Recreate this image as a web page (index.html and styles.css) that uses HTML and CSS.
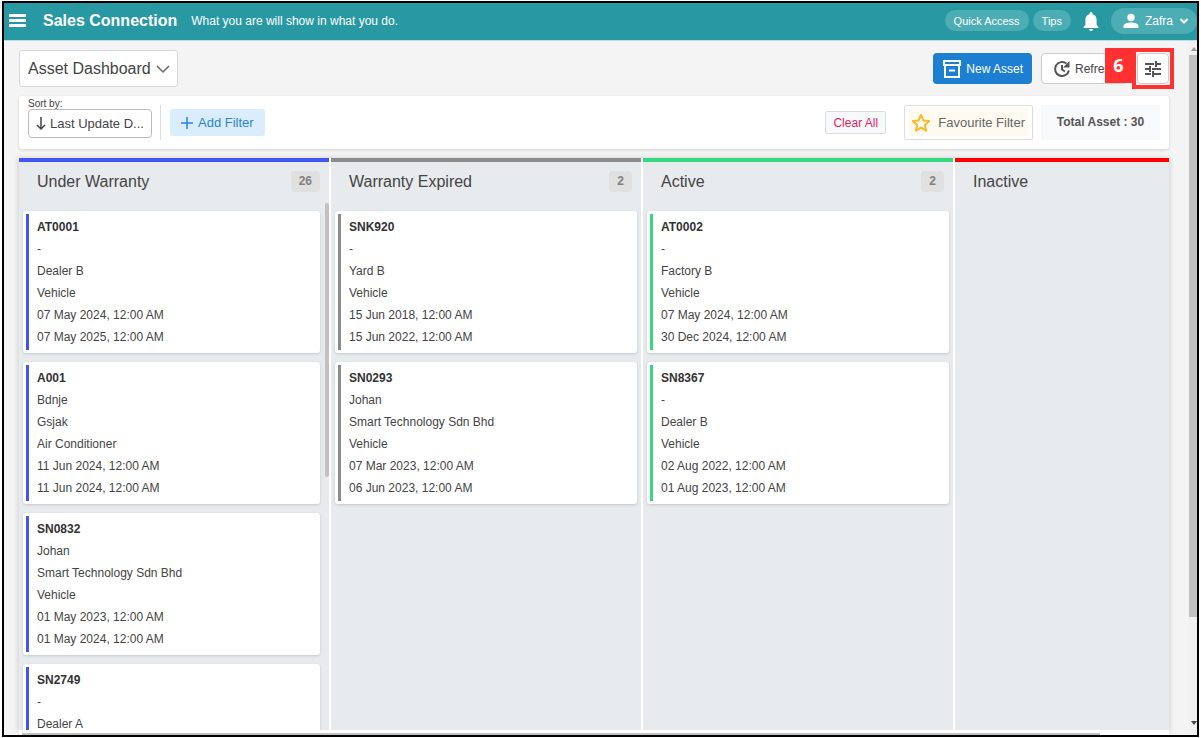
FILE: index.html
```html
<!DOCTYPE html>
<html lang="en">
<head>
    <meta charset="UTF-8">
    <meta name="viewport" content="width=device-width, initial-scale=1.0">
    <title>Asset Dashboard</title>
    <link rel="stylesheet" href="styles.css">
</head>
<body>
<div class="app">
    <header class="topbar">
        <button class="menu-btn" aria-label="Menu"><span></span><span></span><span></span></button>
        <h1>Sales Connection</h1>
        <p>What you are will show in what you do.</p>
        <div class="topbar-right">
            <button class="pill">Quick Access</button>
            <button class="pill">Tips</button>
            <button class="bell" aria-label="Notifications">
                <svg width="16" height="20" viewBox="0 0 16 20"><path fill="#fff" d="M8 1a1.500 1.500 0 0 0-1.500 1.500v.7C3.800 3.900 2.400 6.200 2.400 9v5L.5 16v1h15v-1l-1.900-2V9c0-2.800-1.400-5.100-4.100-5.800v-.7A1.500 1.500 0 0 0 8 1zM6 18a2 2 0 0 0 4 0z"/></svg>
            </button>
            <button class="user">
                <svg width="16" height="16" viewBox="0 0 16 16"><circle cx="8" cy="4.500" r="3.700" fill="#fff"/><path fill="#fff" d="M.5 15v-2c0-2.500 5-3.600 7.500-3.600s7.500 1.100 7.500 3.600v2z"/></svg>
                Zafra
                <svg width="10" height="8" viewBox="0 0 10 8"><path fill="none" stroke="#fff" stroke-width="2" d="M1.500 2 5 5.500 8.500 2"/></svg>
            </button>
        </div>
    </header>

    <div class="body">
        <main>
            <div class="toolbar">
                <div class="page-select">
                    <select aria-label="Dashboard"><option>Asset Dashboard</option></select>
                    <svg width="14" height="10" viewBox="0 0 14 10"><path fill="none" stroke="#666" stroke-width="1.500" d="M1 2l6 6 6-6"/></svg>
                </div>
                <div class="actions">
                    <button class="btn-primary">
                        <svg width="20" height="20" viewBox="0 0 20 20" fill="none" stroke="#fff" stroke-width="2"><rect x="2" y="2" width="16" height="4"/><path d="M3 6v12h14V6M7 11.500h6"/></svg>
                        New Asset
                    </button>
                    <button class="btn-outline">
                        <svg width="18" height="18" viewBox="0 0 18 18" fill="none" stroke="#555" stroke-width="2"><path d="M13.500 3.600A7 7 0 1 0 15.900 10.500M9 5v4.500l3 2"/><path fill="#555" stroke="none" d="M16.500 1v6.500H10z"/></svg>
                        Refresh
                    </button>
                    <div class="tune-wrap">
                        <button class="tune" aria-label="Display settings">
                            <svg width="18" height="18" viewBox="0 0 18 18" fill="none" stroke="#555" stroke-width="2"><path d="M1 4h9M12 4h5M12 1v6M1 9h5M6 6v6M8 9h9M1 14h6M9 14h8M9 11v6"/></svg>
                        </button>
                        <div class="marker">6</div>
                    </div>
                </div>
            </div>

            <section class="filters">
                <div class="sort">
                    <label for="sort">Sort by:</label>
                    <div class="sort-box">
                        <svg width="10" height="14" viewBox="0 0 10 14"><path fill="none" stroke="#444" stroke-width="1.500" d="M5 0v12M1 8l4 4 4-4"/></svg>
                        <select id="sort"><option>Last Update D...</option></select>
                    </div>
                </div>
                <div class="divider"></div>
                <button class="add-filter">
                    <svg width="12" height="12" viewBox="0 0 12 12"><path stroke="#2a85d8" stroke-width="1.500" d="M6 0v12M0 6h12"/></svg>
                    Add Filter
                </button>
                <div class="filters-right">
                    <button class="clear">Clear All</button>
                    <button class="favourite"><span>
                        <svg width="20" height="20" viewBox="0 0 20 20"><path fill="none" stroke="#fbb829" stroke-width="2" stroke-linejoin="round" d="M10 2l2.400 5.400 5.800.6-4.400 3.900 1.300 5.800L10 14.700l-5.100 3 1.300-5.800L1.800 8l5.800-.6z"/></svg>
                        Favourite Filter
                    </span></button>
                    <div class="total">Total Asset : 30</div>
                </div>
            </section>

            <section class="board">
                <div class="column blue scrolls">
                    <div class="column-head"><h2>Under Warranty</h2><span class="count">26</span></div>
                    <div class="cards">
                        <article class="card"><ul><li>AT0001</li><li>-</li><li>Dealer B</li><li>Vehicle</li><li>07 May 2024, 12:00 AM</li><li>07 May 2025, 12:00 AM</li></ul></article>
                        <article class="card"><ul><li>A001</li><li>Bdnje</li><li>Gsjak</li><li>Air Conditioner</li><li>11 Jun 2024, 12:00 AM</li><li>11 Jun 2024, 12:00 AM</li></ul></article>
                        <article class="card"><ul><li>SN0832</li><li>Johan</li><li>Smart Technology Sdn Bhd</li><li>Vehicle</li><li>01 May 2023, 12:00 AM</li><li>01 May 2024, 12:00 AM</li></ul></article>
                        <article class="card"><ul><li>SN2749</li><li>-</li><li>Dealer A</li></ul></article>
                    </div>
                    <div class="column-thumb"></div>
                </div>
                <div class="column grey">
                    <div class="column-head"><h2>Warranty Expired</h2><span class="count">2</span></div>
                    <div class="cards">
                        <article class="card"><ul><li>SNK920</li><li>-</li><li>Yard B</li><li>Vehicle</li><li>15 Jun 2018, 12:00 AM</li><li>15 Jun 2022, 12:00 AM</li></ul></article>
                        <article class="card"><ul><li>SN0293</li><li>Johan</li><li>Smart Technology Sdn Bhd</li><li>Vehicle</li><li>07 Mar 2023, 12:00 AM</li><li>06 Jun 2023, 12:00 AM</li></ul></article>
                    </div>
                </div>
                <div class="column green">
                    <div class="column-head"><h2>Active</h2><span class="count">2</span></div>
                    <div class="cards">
                        <article class="card"><ul><li>AT0002</li><li>-</li><li>Factory B</li><li>Vehicle</li><li>07 May 2024, 12:00 AM</li><li>30 Dec 2024, 12:00 AM</li></ul></article>
                        <article class="card"><ul><li>SN8367</li><li>-</li><li>Dealer B</li><li>Vehicle</li><li>02 Aug 2022, 12:00 AM</li><li>01 Aug 2023, 12:00 AM</li></ul></article>
                    </div>
                </div>
                <div class="column red">
                    <div class="column-head"><h2>Inactive</h2></div>
                </div>
            </section>
            <div class="hscroll"><div></div></div>
        </main>
        <div class="vscroll">
            <svg width="8" height="14" viewBox="0 0 8 14"><path fill="#999" d="M2 10l3-4 3 4z"/></svg>
            <div class="vthumb"></div>
            <svg width="8" height="14" viewBox="0 0 8 14"><path fill="#444" d="M2 0h6L5 4z"/></svg>
        </div>
    </div>
</div>
</body>
</html>
```
FILE: styles.css
```css
* {
    margin: 0;
    padding: 0;
    box-sizing: border-box;
}

body {
    font-family: "Liberation Sans", Arial, sans-serif;
    font-size: 13px;
    color: #444;
    background: #fff;
    height: 100vh;
    padding: 1px 2px;
}

button, select {
    font: inherit;
    color: inherit;
    border: none;
    background: none;
    cursor: pointer;
}

svg {
    flex: none;
}

.app {
    height: 100%;
    border: 2px solid #000;
    display: flex;
    flex-direction: column;
    overflow: hidden;
}

/* Top bar */
.topbar {
    background: #2899a3;
    color: #fff;
    height: 38px;
    flex: none;
    display: flex;
    align-items: center;
    border-bottom: 1px solid #b9dfe3;
    padding: 0 0 2px 5px;
}

.menu-btn {
    width: 17px;
    display: grid;
    gap: 2px;
}

.menu-btn span {
    height: 3px;
    background: #fff;
}

.topbar h1 {
    font-size: 16px;
    margin: 0 14px 0 17px;
}

.topbar p {
    font-size: 12px;
}

.topbar-right {
    margin-left: auto;
    display: flex;
    align-items: center;
    font-size: 12px;
}

.pill {
    background: #4dadb5;
    border-radius: 11px;
    height: 21px;
    padding: 0 9px;
    margin-right: 4px;
    font-size: 11px;
}

.bell {
    display: flex;
    margin: 0 12px 0 8px;
}

.user {
    background: #4dadb5;
    border-radius: 13px;
    height: 26px;
    padding: 0 8px 0 12px;
    display: flex;
    align-items: center;
    gap: 6px;
}

/* Page */
.body {
    flex: 1;
    min-height: 0;
    display: flex;
    background: #f4f4f4;
}

main {
    flex: 1;
    min-width: 0;
    display: flex;
    flex-direction: column;
    padding: 9px 20px 0 15px;
}

.toolbar {
    display: flex;
    justify-content: space-between;
    align-items: center;
    margin-bottom: 9px;
}

.page-select {
    position: relative;
}

.page-select select {
    appearance: none;
    display: block;
    width: 159px;
    height: 37px;
    padding-left: 8px;
    font-size: 16px;
    background: #fff;
    border: 1px solid #d5d9de;
    border-radius: 3px;
}

.page-select svg {
    position: absolute;
    right: 8px;
    top: 14px;
    pointer-events: none;
}

.actions {
    display: flex;
    gap: 9px;
    font-size: 12px;
}

.btn-primary, .btn-outline {
    display: flex;
    align-items: center;
    height: 31px;
    border-radius: 4px;
}

.btn-primary {
    background: #1c7fd2;
    color: #fff;
    gap: 4px;
    padding: 0 9px;
}

.btn-outline, .tune {
    background: #fff;
    border: 1px solid #ccc;
}

.btn-outline {
    width: 87px;
    gap: 4px;
    padding-left: 11px;
}

.tune-wrap {
    position: relative;
}

.tune {
    width: 32px;
    height: 31px;
    border-radius: 4px;
    display: grid;
    place-items: center;
}

/* Numbered callout around the settings button */
.tune-wrap::after {
    content: "";
    position: absolute;
    inset: -5px;
    border: 4px solid #ff3131;
}

.marker {
    position: absolute;
    right: 37px;
    top: -5px;
    width: 27px;
    height: 35px;
    background: #ff3131;
    color: #fff;
    font: bold 18px/35px "Open Sans", sans-serif;
    text-align: center;
}

/* Filters */
.filters {
    background: #fff;
    border-radius: 3px;
    box-shadow: 0 1px 3px rgba(0, 0, 0, 0.15);
    min-height: 53px;
    padding: 0 9px;
    display: flex;
    align-items: center;
    margin-bottom: 9px;
}

.sort {
    align-self: flex-start;
    padding-top: 3px;
}

.sort label {
    display: block;
    font-size: 10px;
    line-height: 10px;
}

.sort-box {
    display: flex;
    align-items: center;
    width: 124px;
    height: 29px;
    border: 1px solid #bbb;
    border-radius: 4px;
    padding-left: 7px;
    gap: 4px;
}

.sort-box select {
    appearance: none;
}

.divider {
    width: 1px;
    height: 35px;
    margin: 0 9px 0 8px;
    background: #ddd;
}

.add-filter {
    display: flex;
    align-items: center;
    gap: 5px;
    height: 27px;
    padding: 0 11px;
    background: #d9edfd;
    color: #2a85d8;
    border-radius: 3px;
}

.filters-right {
    margin-left: auto;
    display: flex;
    align-items: center;
}

.clear {
    height: 23px;
    width: 61px;
    margin-right: 18px;
    font-size: 12px;
    color: #e91e63;
    background: #f8f9fb;
    border: 1px solid #ddd;
    border-radius: 2px;
}

.favourite {
    height: 35px;
    padding: 0 4px;
    margin-right: 8px;
    border: 1px solid #ddd;
    border-radius: 2px;
    color: #666;
}

.favourite span {
    display: flex;
    align-items: center;
    gap: 7px;
    height: 27px;
    padding: 0 3px 0 2px;
    background: #fffaf0;
}

.total {
    width: 119px;
    line-height: 35px;
    text-align: center;
    font-size: 12px;
    font-weight: bold;
    color: #555;
    background: #f8f9fb;
}

/* Board */
.board {
    flex: 1;
    min-height: 0;
    display: flex;
    gap: 2px;
    background: #fff;
    box-shadow: 0 1px 6px rgba(0, 0, 0, 0.2);
    overflow: hidden;
}

.column {
    flex: none;
    width: 310px;
    background: #e7ebee;
    border-top: 4px solid;
    position: relative;
}

.blue { border-color: #4255f5; }
.grey { border-color: #8c8c8c; }
.green { border-color: #34d880; }
.red { border-color: #f00; }

.column-head {
    display: flex;
    align-items: center;
    justify-content: space-between;
    height: 40px;
    padding: 0 9px 0 18px;
    border-bottom: 1px solid #ebebeb;
}

.column-head h2 {
    font-size: 16px;
    font-weight: normal;
}

.count {
    background: #e0e0e0;
    color: #808080;
    font-size: 12px;
    font-weight: bold;
    line-height: 21px;
    padding: 0 8px;
    border-radius: 3px;
}

.cards {
    display: grid;
    gap: 9px;
    padding: 9px 4px 0;
    font-size: 12px;
}

.scrolls .cards {
    padding-right: 9px;
}

.card {
    background: #fff;
    border-radius: 3px;
    box-shadow: 0 1px 3px rgba(0, 0, 0, 0.15);
    padding: 3px;
}

.card ul {
    list-style: none;
    border-left: 3px solid;
    border-color: inherit;
    padding: 2px 0 2px 8px;
    line-height: 22px;
}

.blue .card { border-color: #4255f5; }
.grey .card { border-color: #8c8c8c; }
.green .card { border-color: #34d880; }

.card li:first-child {
    font-weight: bold;
    color: #333;
}

.column-thumb {
    position: absolute;
    top: 41px;
    right: 0;
    width: 4px;
    height: 274px;
    border-radius: 2px;
    background: #c1c1c1;
}

/* Scrollbars */
.hscroll {
    flex: none;
    height: 5px;
    padding: 3px 0 0 3px;
    background: #fff;
    position: relative;
    z-index: 1;
}

.hscroll div {
    width: 94%;
    height: 2px;
    background: #c1c1c1;
}

.vscroll {
    width: 8px;
    background: #f1f1f1;
    display: flex;
    flex-direction: column;
}

.vthumb {
    height: 81%;
    margin-bottom: auto;
    background: #c1c1c1;
}
```
